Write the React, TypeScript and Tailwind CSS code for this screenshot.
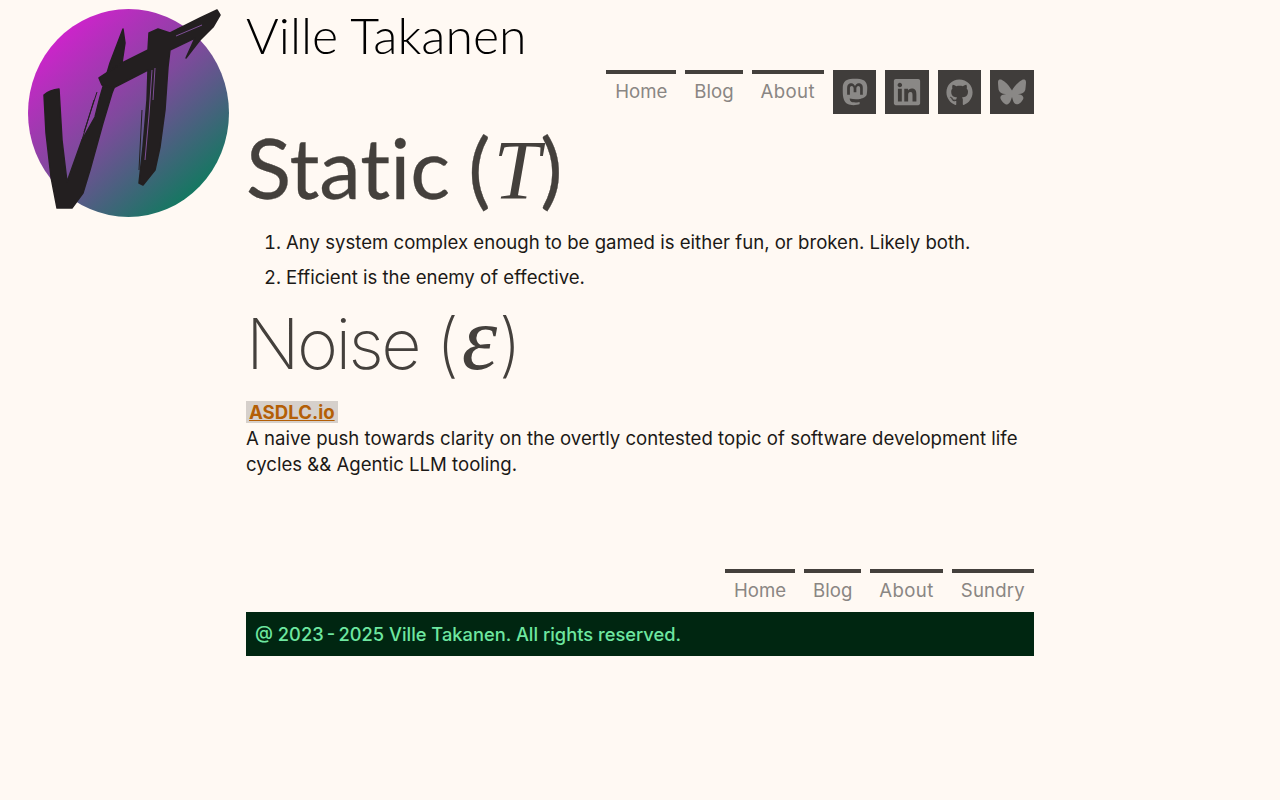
import { FaGithub, FaLinkedin, FaMastodon } from 'react-icons/fa'
import { FaBluesky } from 'react-icons/fa6'

const body = "font-['Inter',sans-serif]"

function Logo() {
    return (
        <svg width="246" height="225" viewBox="0 0 246 225" className="block">
            <defs>
                <linearGradient id="disc" x1="0.12" y1="0.08" x2="0.82" y2="0.92">
                    <stop offset="0" stopColor="#d61fd0" />
                    <stop offset="0.5" stopColor="#7e4a9c" />
                    <stop offset="1" stopColor="#0f7a5e" />
                </linearGradient>
            </defs>
            <ellipse cx="128.5" cy="113" rx="100.5" ry="104" fill="url(#disc)" />
            <g fill="#231f20" stroke="#231f20" strokeWidth="1.5" strokeLinejoin="round">
                {/* V stroke */}
                <path d="M44 95 Q50 90 59 89 L62 140 L67 182 L82 140 L95 117 L100 97 L110 63 L123 29 L125 43 L122 63 L118 78 L112 93 L103 123 L90 170 L83 193 L72 208 L57 208 L51 177 L46 133 Z" />
                {/* T stroke */}
                <path d="M99 78 L122 63 L148 50 L149 33 L158 29 L170 33 L200 18 L217 10 L220 15 L213 27 L200 40 L186 58 L195 38 L170 50 L168 67 L165 110 L160 147 L155 170 L143 185 L139 183 L143 147 L147 100 L148 70 L113 88 L102 85 Z" />
            </g>
            {/* dry brush streaks */}
            <path stroke="#231f20" strokeWidth="1" fill="none" d="M97 92 L84 132 M94 100 L82 140 M142 110 L139 170 M176 30 L210 14 M172 44 L198 30" />
            <path stroke="#7e4f97" strokeWidth="1" fill="none" d="M152 70 L149 115 L145 160 M155 68 L153 100 M176 36 L202 25" />
        </svg>
    )
}

function NavLink({ label, spacing = '' }: { label: string; spacing?: string }) {
    return (
        <a href="#" className={`block h-[44px] border-t-4 border-[#44403c] px-[9px] pt-[2px] text-[18.6px] leading-[30px] text-[#8a8683] ${spacing} ${body}`}>
            {label}
        </a>
    )
}

function IconLink({ children, wide }: { children: React.ReactNode; wide?: boolean }) {
    return (
        <a href="#" className={`flex h-[44px] items-center justify-center bg-[#403d3b] text-[#8a8886] ${wide ? 'w-[44px]' : 'w-[43px]'}`}>
            {children}
        </a>
    )
}

export default function App() {
    return (
        <div className="flex min-h-[800px] bg-[#fff9f3]">
            <aside className="w-[246px] shrink-0">
                <Logo />
            </aside>
            <main className="w-[788px]">
                {/* Header */}
                <h1 className="h-[70px] font-['Lato',sans-serif] text-[50px] font-light leading-[70px] text-black">Ville Takanen</h1>
                <nav className="flex justify-end gap-[9px]">
                    <NavLink label="Home" />
                    <NavLink label="Blog" />
                    <NavLink label="About" spacing="tracking-[0.4px]" />
                    <IconLink><FaMastodon size={30} /></IconLink>
                    <IconLink wide><FaLinkedin size={30} /></IconLink>
                    <IconLink><FaGithub size={27} /></IconLink>
                    <IconLink wide><FaBluesky size={28} /></IconLink>
                </nav>

                <h2 className="mt-[3px] h-[100px] font-['Lato',sans-serif] text-[83.5px] font-normal leading-[100px] text-[#44403c] [-webkit-text-stroke:0.3px_#44403c] [font-variant-ligatures:none]">
                    Static<span className="ml-[18px]">(</span><span className="ml-[3px] font-['Liberation_Serif',serif] text-[84px] font-normal italic leading-none [-webkit-text-stroke:0px]">T</span>)
                </h2>
                <ol className={`mt-[8px] list-decimal pl-[40px] text-[18.6px] leading-[35px] text-[#1c1917] ${body}`}>
                    <li>Any system complex enough to be gamed is either fun, or broken. Likely both.</li>
                    <li>Efficient is the enemy of effective.</li>
                </ol>

                <h2 className={`-mt-[1px] h-[90px] text-[70px] font-extralight leading-[90px] tracking-[-2.6px] text-[#44403c] ${body}`}>
                    Noise<span className="ml-[17px]">(</span><span className="ml-[5px] mr-[4px] font-['Liberation_Serif',serif] text-[90px] italic leading-none">ε</span>)
                </h2>
                <div className={`mt-[15px] text-[18.6px] leading-[26px] text-[#1c1917] ${body}`}>
                    <a href="#" className="inline-block h-[22px] bg-[#d6d0cb] px-[3px] font-bold leading-[22px] text-[#b45f06] underline">ASDLC.io</a>
                    <p>A naive push towards clarity on the overtly contested topic of software development life cycles &amp;&amp; Agentic LLM tooling.</p>
                </div>

                {/* Footer */}
                <nav className="mt-[92px] flex justify-end gap-[9px]">
                    <NavLink label="Home" />
                    <NavLink label="Blog" />
                    <NavLink label="About" spacing="tracking-[0.4px]" />
                    <NavLink label="Sundry" spacing="tracking-[0.2px]" />
                </nav>
                <footer className={`-mt-[1px] flex h-[44px] items-center bg-[#002611] px-[9px] pt-[1px] text-[18.3px] font-medium text-[#6ee7a0] ${body}`}>
                    @ 2023{'\u2009'}-{'\u2009'}2025 Ville Takanen. All rights reserved.
                </footer>
            </main>
        </div>
    )
}
